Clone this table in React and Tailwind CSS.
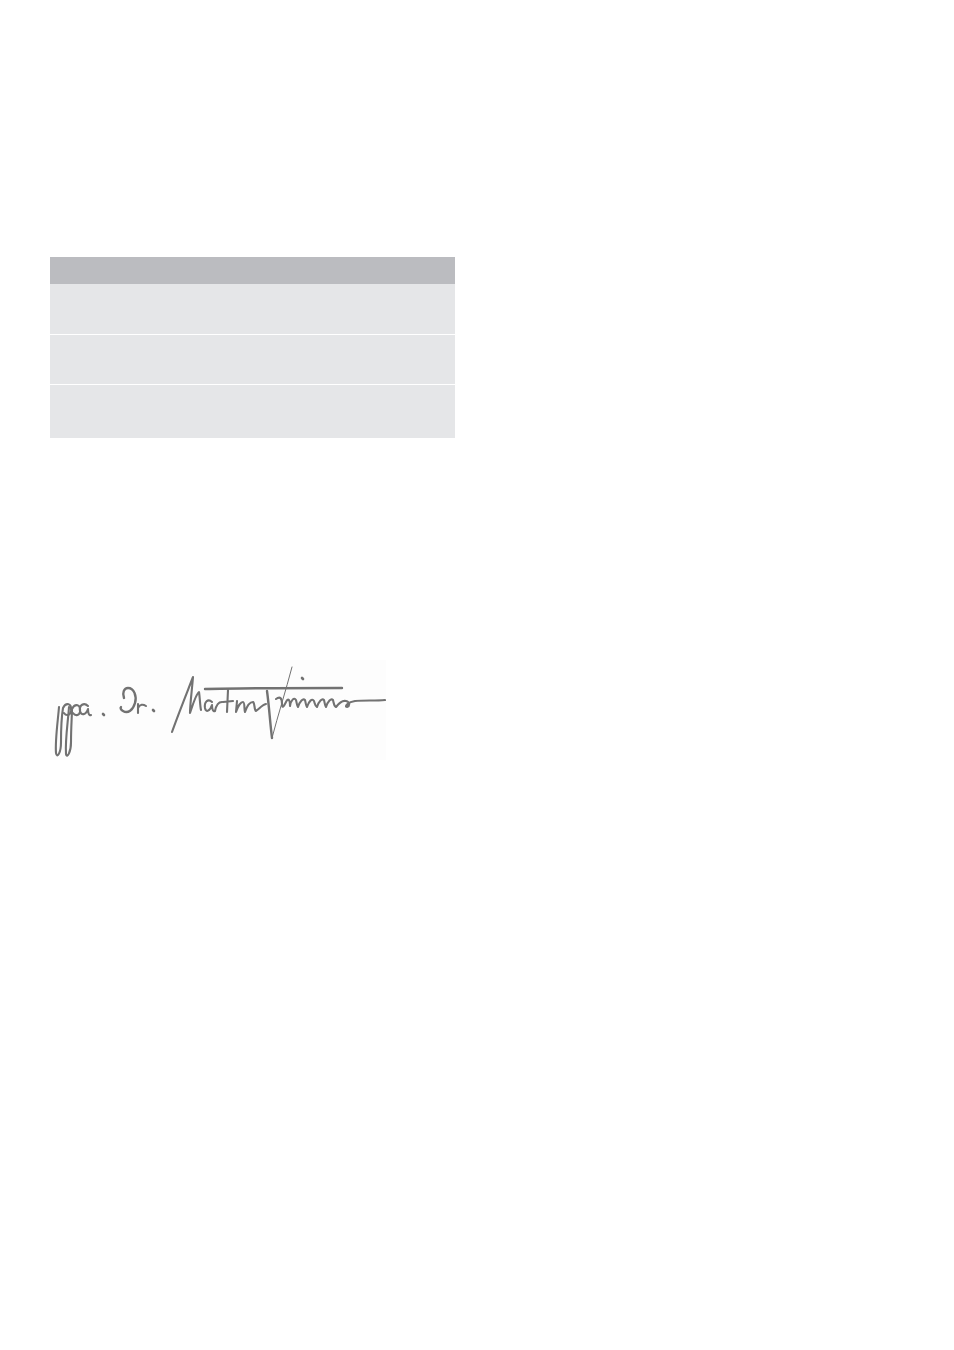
export default function App() {
  const rows = [
    { h: 'h-[50px]' },
    { h: 'h-[50px]' },
    { h: 'h-[54px]' },
  ];

  return (
    <div className="min-h-[1350px] w-full bg-white px-[50px] pt-[257px] font-['Liberation_Sans',sans-serif]">
      <div className="w-[405px]">
        <div className="h-[27px] bg-[#bbbcc0]" />
        {rows.map((r, i) => (
          <div
            key={i}
            className={`${r.h} bg-[#e5e6e8] ${i > 0 ? 'border-t border-white' : ''}`}
          />
        ))}
      </div>

      <div className="mt-[222px] h-[100px] w-[336px] bg-[#fdfdfd]">
        <Signature />
      </div>
    </div>
  );
}

function Signature() {
  return (
    <svg
      viewBox="0 0 336 100"
      width="336"
      height="100"
      fill="none"
      stroke="#727272"
      strokeLinecap="round"
      strokeLinejoin="round"
    >
      <g strokeWidth="2.1">
        {/* pp */}
        <path d="M9 47 C8 60 5 80 6 93 C7 99 11 93 11 82 C11 68 12 54 13 48 C16 42 22 43 21 51 C20 56 16 56 14 53" />
        <path d="M19 47 C18 62 15 80 16 94 C17 99 21 92 21 82 C21 68 22 55 22 49 C25 43 31 44 30 52 C29 56 25 56 23 53" />
        {/* a */}
        <path d="M38 46 C34 42 29 45 30 51 C31 56 36 55 38 49 C38 53 39 56 41 55" />
        {/* . */}
        <path d="M53 54 L54 55" strokeWidth="2.6" />
        {/* D */}
        <path d="M74 38 C72 33 74 28 78 28 C84 28 87 36 85 43 C83 50 78 54 73 51 C71 50 70 48 71 47" strokeWidth="2.4" />
        {/* r */}
        <path d="M88 44 L88 53 M88 48 C90 44 93 44 96 46" />
        {/* . */}
        <path d="M103 50 L104 51" strokeWidth="2.6" />
        {/* Martin */}
        <path d="M122 72 C128 55 138 30 143 17 C142 30 140 44 140 53 C143 44 146 34 149 32 C150 38 150 46 151 50" />
        <path d="M162 42 C158 38 154 42 155 48 C156 53 160 51 162 45 C162 49 163 52 165 51 C166 46 168 42 172 42" />
        <path d="M178 30 L177 52 M173 42 L183 41" />
        <path d="M187 41 L186 52 C188 46 191 42 193 42 C195 42 194 50 195 52 C197 46 200 42 203 42 C205 43 204 50 206 51 C209 49 212 45 216 44" />
        {/* top bar */}
        <path d="M155 29 C190 28 250 28 292 28" strokeWidth="2.4" />
        {/* V */}
        <path d="M217 31 C219 45 220 62 222 78" strokeWidth="2.4" />
        <path d="M222 78 C228 55 236 30 242 7" strokeWidth="1" />
        {/* imm */}
        <path d="M226 39 C230 36 232 38 232 44 C232 48 233 48 236 42 C238 38 240 39 240 46 C241 40 244 37 246 40 C247 44 247 46 248 47 C250 41 253 38 255 40 C256 44 256 46 257 47 C259 41 262 38 264 41 C265 44 265 46 267 47 C269 41 272 38 274 40 C275 44 275 46 276 47 C278 41 281 38 283 40 C284 44 284 46 286 47 C289 43 292 40 296 41 C300 42 300 46 297 47 C294 47 298 42 305 41 C315 40 325 41 335 40" />
        {/* i dot */}
        <path d="M252 18 L253 19" strokeWidth="2.6" />
      </g>
    </svg>
  );
}
